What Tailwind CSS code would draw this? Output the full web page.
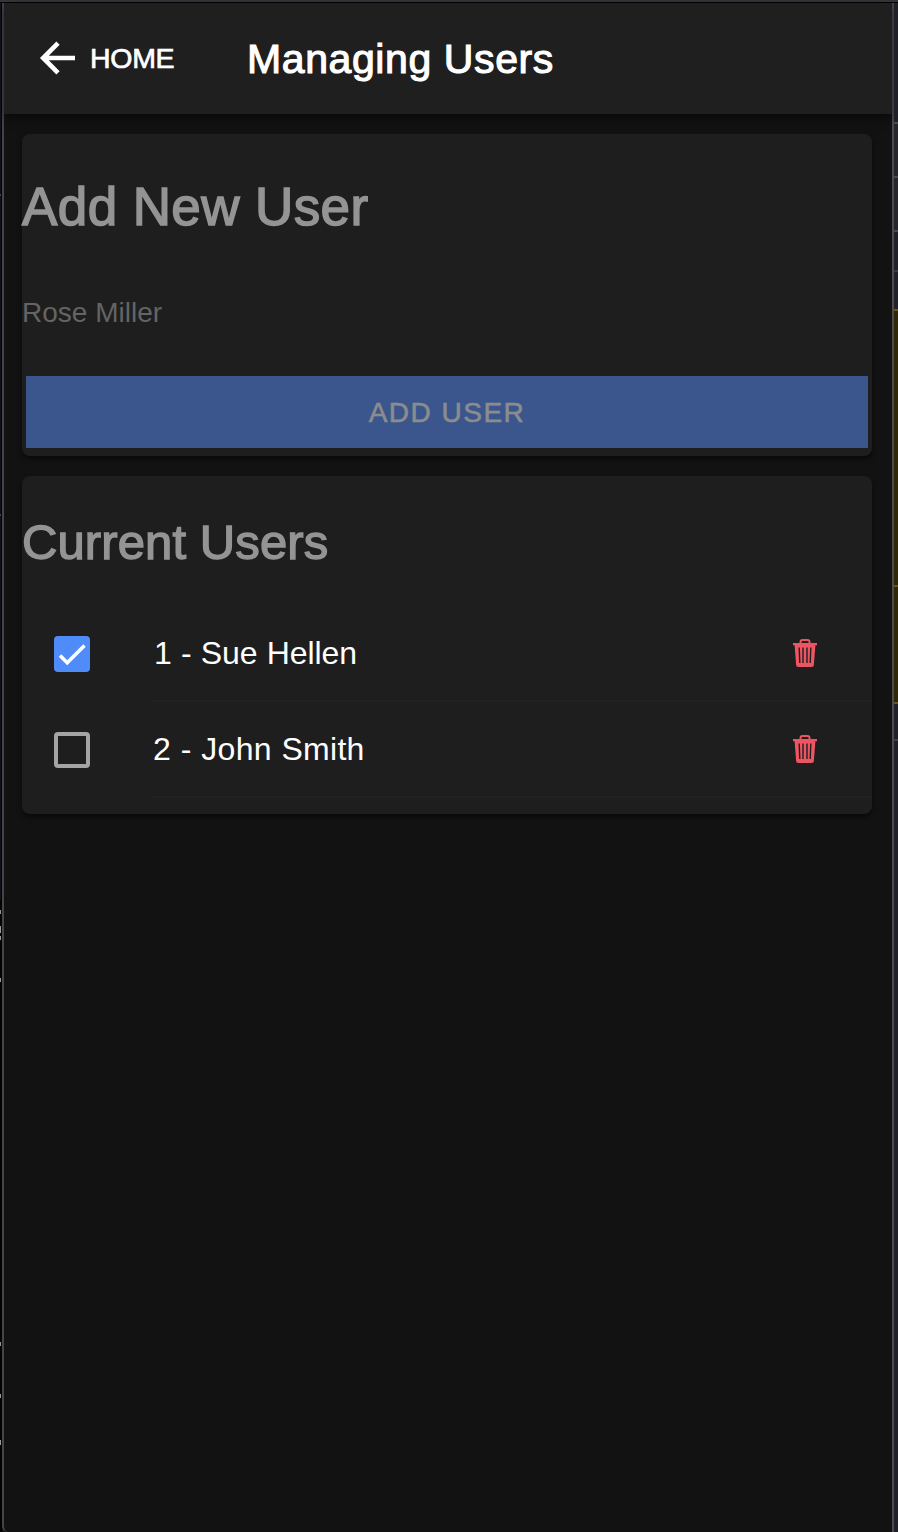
<!DOCTYPE html>
<html lang="en">
<head>
<meta charset="utf-8">
<title>Managing Users</title>
<script src="https://cdn.jsdelivr.net/npm/@tailwindcss/browser@4"></script>
</head>
<body class="h-[1532px] w-[898px] overflow-hidden bg-[#121212] font-['Liberation_Sans',sans-serif] text-white">
<svg class="hidden">
  <symbol id="trash" viewBox="0 0 26 30">
    <path d="M8.500 5.500V4a2 2 0 0 1 2-2h5a2 2 0 0 1 2 2v1.500" fill="none" stroke="#ed5562" stroke-width="2"/>
    <path d="M1 5h24v2.200h-1.600l-1.500 19.300a2.500 2.500 0 0 1-2.500 2.500H6.600a2.500 2.500 0 0 1-2.500-2.500L2.600 7.200H1Z" fill="#ed5562"/>
    <path d="m7.200 9.500.6 15.500M11 9.500V25M15 9.500V25M18.800 9.500 18.200 25" fill="none" stroke="#1e1e1e" stroke-width="1.400"/>
  </symbol>
</svg>
<div class="flex h-full flex-col">
  <div class="h-[3px] shrink-0 border-b border-black bg-[#36363e]"></div>
  <div class="flex min-h-0 flex-1">
    <!-- left edge of the window -->
    <div class="relative w-[2px] shrink-0 bg-[#020203]">
      <i class="absolute left-0 top-0 h-[897px] w-px bg-[#10111a]"></i>
      <i class="absolute left-0 top-[191px] h-0.5 w-px bg-[#44454a]"></i>
      <i class="absolute left-0 top-[511px] h-0.5 w-px bg-[#44454a]"></i>
      <i class="absolute left-0 top-[907px] h-1 w-px bg-[#999]"></i>
      <i class="absolute left-0 top-[923px] h-[7px] w-px bg-[#999]"></i>
      <i class="absolute left-0 top-[933px] h-1 w-px bg-[#999]"></i>
      <i class="absolute left-0 top-[975px] h-1 w-px bg-[#999]"></i>
      <i class="absolute left-0 top-[1339px] h-1 w-px bg-[#999]"></i>
      <i class="absolute left-0 top-[1391px] h-1 w-px bg-[#999]"></i>
      <i class="absolute left-0 top-[1437px] h-[5px] w-px bg-[#999]"></i>
    </div>
    <main class="flex w-[892px] shrink-0 flex-col rounded-bl-[6px] border-x-2 border-l-[#454547] border-r-[#4b4b4e] bg-[#121212]">
      <header class="flex h-[111px] shrink-0 items-center bg-[#1f1f1f] pl-[35px] shadow-[0_4px_10px_rgba(0,0,0,0.5)]">
        <a class="flex w-[208px] items-center">
          <svg class="mt-[-1px] h-9 w-[37px]" viewBox="0 0 37 36" fill="none" stroke="#fff" stroke-width="4.6"><path d="M19 3.200 4.200 18 19 32.800M4 18h32"/></svg>
          <span class="-mt-0.5 ml-[14px] text-[28.5px] leading-8 tracking-[-0.3px] [-webkit-text-stroke:0.7px_white]">HOME</span>
        </a>
        <h1 class="whitespace-nowrap text-[41px] leading-[48px] tracking-[0.6px] [-webkit-text-stroke:1.1px_white]">Managing Users</h1>
      </header>
      <section class="ml-[18px] mt-5 flex h-[322px] w-[850px] shrink-0 flex-col rounded-lg bg-[#1e1e1e] shadow-[0_3px_5px_rgba(0,0,0,0.5)]">
        <h2 class="mt-[41px] h-16 text-[53px] leading-[64px] tracking-[0.4px] text-[#949494] [-webkit-text-stroke:1.5px_#949494]">Add New User</h2>
        <p class="mt-[58px] h-8 text-[28px] leading-8 text-[#646464]">Rose Miller</p>
        <button class="mx-1 mt-[47px] h-[72px] bg-[#3b568d] pt-0.5 text-[28px] tracking-[1.5px] text-[#8b8c8e] [-webkit-text-stroke:0.6px_#8b8c8e]">ADD USER</button>
      </section>
      <section class="ml-[18px] mt-5 flex h-[338px] w-[850px] shrink-0 flex-col rounded-lg bg-[#1e1e1e] shadow-[0_3px_5px_rgba(0,0,0,0.5)]">
        <h2 class="mt-9 h-[60px] text-[49px] leading-[60px] tracking-[0.1px] text-[#949494] [-webkit-text-stroke:1.4px_#949494]">Current Users</h2>
        <ul class="mt-[34px]">
          <li class="flex h-24 pl-8">
            <span class="mt-[30px] h-9 w-9 rounded bg-[#508cf9]">
              <svg class="h-9 w-9" viewBox="0 0 36 36" fill="none" stroke="#fff" stroke-width="3.6"><path d="m6 19.500 7.200 7.200L30.500 9.400"/></svg>
            </span>
            <div class="ml-[62px] flex flex-1 items-center justify-between border-b-2 border-[#222222] pr-[54px]">
              <span class="pl-[2px] text-[32px] leading-9 [word-spacing:0.5px] tracking-[-0.1px]">1 - Sue Hellen</span>
              <svg class="h-[30px] w-[26px]"><use href="#trash"/></svg>
            </div>
          </li>
          <li class="flex h-24 pl-8">
            <span class="mt-[30px] h-9 w-9 rounded border-4 border-[#a4a4a4]"></span>
            <div class="ml-[62px] flex flex-1 items-center justify-between border-b-2 border-[#222222] pr-[54px]">
              <span class="pl-px text-[32px] leading-9 tracking-[0.3px] [word-spacing:0.4px]">2 - John Smith</span>
              <svg class="h-[30px] w-[26px]"><use href="#trash"/></svg>
            </div>
          </li>
        </ul>
      </section>
    </main>
    <!-- panel visible past the right edge -->
    <aside class="flex w-1 shrink-0 flex-col bg-[#202128]">
      <div class="h-[121px] border-b-2 border-[#4a4a4e]"></div>
      <div class="h-[54px] border-b-2 border-[#4a4a4e] bg-[#26252b]"></div>
      <div class="h-[54px] border-b-2 border-[#4a4a4e] bg-[#26252b]"></div>
      <div class="h-10 border-b-2 border-[#3a3a3e]"></div>
      <div class="h-[39px] border-b-2 border-[#6b5417]"></div>
      <div class="h-[276px] border-b-2 border-[#6b5417] bg-[#302707]"></div>
      <div class="h-[117px] border-b-2 border-[#6b5417] bg-[#302707]"></div>
      <div class="h-[37px] border-b-2 border-[#3f3f44]"></div>
    </aside>
  </div>
</div>
</body>
</html>
